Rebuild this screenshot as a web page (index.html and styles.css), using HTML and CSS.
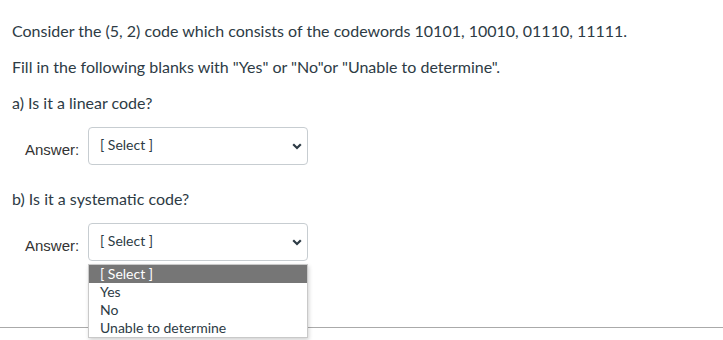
FILE: index.html
```html
<!DOCTYPE html>
<html lang="en">
<head>
<meta charset="UTF-8" />
<title>Quiz question</title>
<link rel="stylesheet" href="styles.css">
</head>
<body>

<div class="question">
  <p>Consider the (5, 2) code which consists of the codewords 10101, 10010, 01110, 11111.</p>
  <p>Fill in the following blanks with "Yes" or "No"or "Unable to determine".</p>
  <p>a) Is it a linear code?</p>

  <div class="answer-row">
    <span class="answer-label">Answer:</span>
    <div class="select-box">
      <span class="select-text">[ Select ]</span>
      <svg class="chevron" width="10" height="7" viewBox="0 0 10 7"><path d="M1.2 1.2 L5 5 L8.8 1.2" fill="none" stroke="#2d3b45" stroke-width="2.2"/></svg>
    </div>
  </div>

  <p class="sub-q">b) Is it a systematic code?</p>

  <div class="answer-row">
    <span class="answer-label">Answer:</span>
    <div class="select-box">
      <span class="select-text">[ Select ]</span>
      <svg class="chevron" width="10" height="7" viewBox="0 0 10 7"><path d="M1.2 1.2 L5 5 L8.8 1.2" fill="none" stroke="#2d3b45" stroke-width="2.2"/></svg>
      <ul class="dropdown">
        <li class="active">[ Select ]</li>
        <li>Yes</li>
        <li>No</li>
        <li>Unable to determine</li>
      </ul>
    </div>
  </div>
</div>

<div class="divider"></div>

</body>
</html>
```

FILE: styles.css
```css
body {
  font-family: Lato, "Liberation Sans", sans-serif;
  background: #fff;
  color: #2d3b45;
  margin: 0;
  padding: 0;
  min-height: 340px;
}
.question {
  padding: 19px 12px 0 12px;
}
.question p {
  font-size: 16px;
  line-height: 24px;
  margin: 0 0 12px 0;
}
.question p.sub-q {
  margin: 22px 0 12px 0;
}
/* answer rows */
.answer-row {
  display: flex;
  align-items: center;
  padding-left: 13px;
}
.answer-label {
  font-family: "Liberation Sans", Arial, sans-serif;
  font-size: 15px;
  color: #333;
  width: 63px;
  padding-top: 6px;
}
.select-box {
  position: relative;
  box-sizing: border-box;
  width: 220px;
  height: 38px;
  border: 1px solid #c7cdd1;
  border-radius: 4px;
  background: #fff;
  padding: 6px 0 0 11px;
}
.select-text {
  font-size: 14px;
  color: #2d3b45;
}
.chevron {
  position: absolute;
  right: 5px;
  top: 15px;
}
/* open list */
.dropdown {
  position: absolute;
  left: -1px;
  top: 40px;
  width: 220px;
  box-sizing: border-box;
  margin: 0;
  padding: 0;
  list-style: none;
  background: #fff;
  border: 1px solid #c9c9c9;
  box-shadow: 1px 2px 4px rgba(0, 0, 0, 0.18);
  z-index: 2;
}
.dropdown li {
  font-size: 14px;
  line-height: 18px;
  height: 18px;
  padding-left: 11px;
  color: #2d3b45;
}
.dropdown li.active {
  background: #767676;
  color: #fff;
}
.divider {
  margin-top: 66px;
  height: 1px;
  background: #aaa;
}
```
